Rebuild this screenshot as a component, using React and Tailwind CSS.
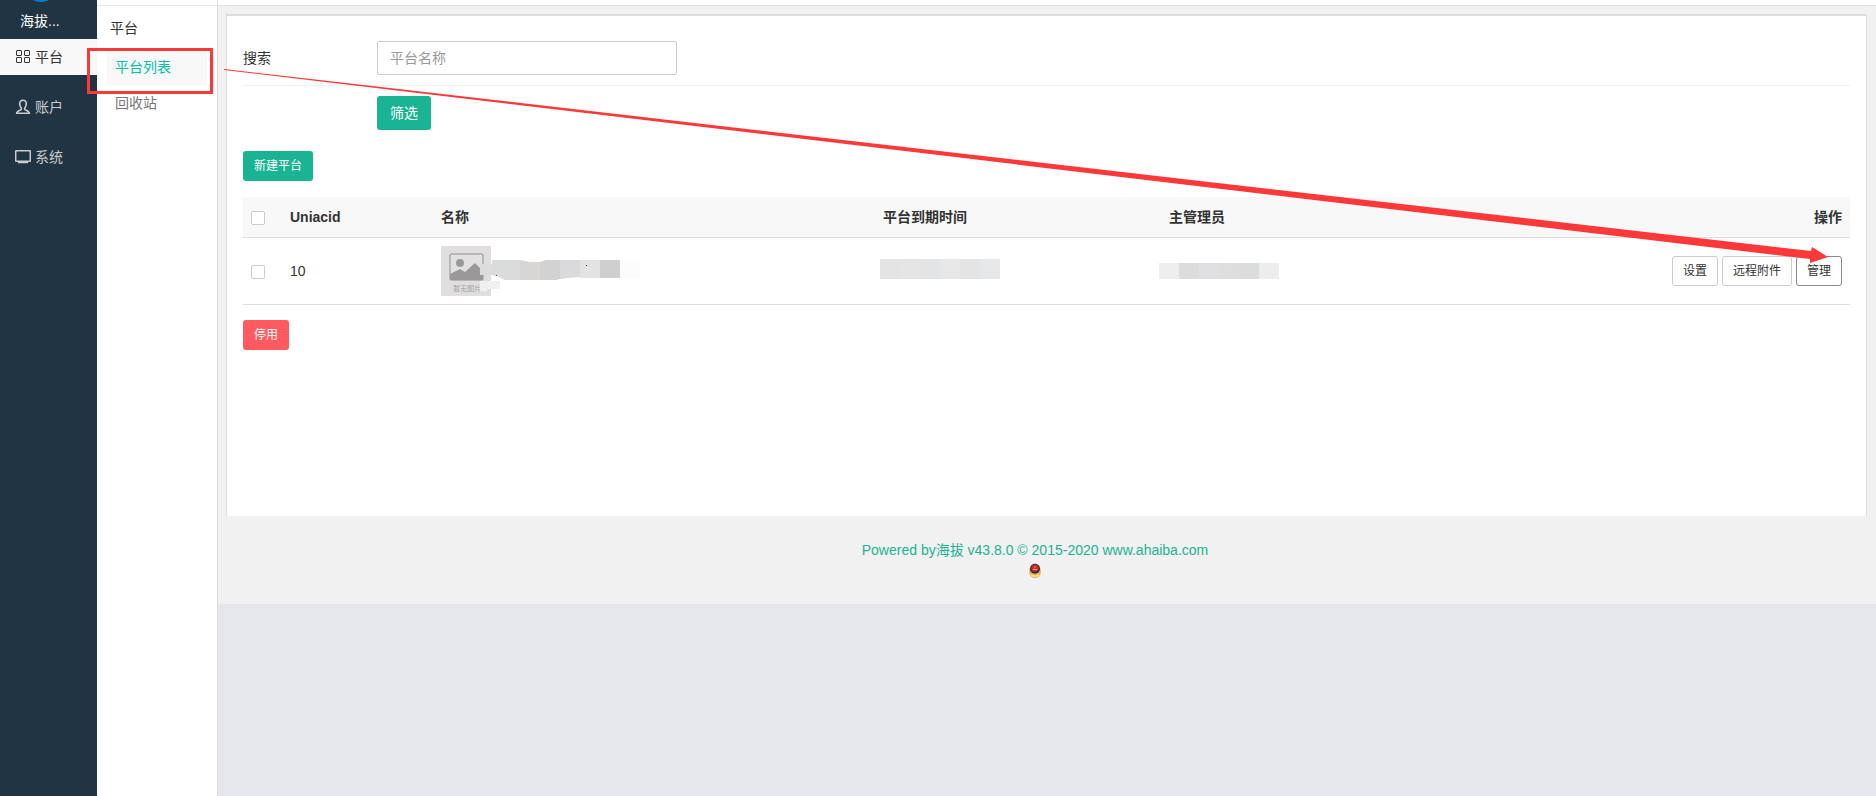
import React, { useState } from 'react';

const menus = [
  { key: 'platform', label: '平台', icon: GridIcon },
  { key: 'account', label: '账户', icon: UserIcon },
  { key: 'system', label: '系统', icon: ScreenIcon },
];

const platforms = [{ id: 10 }];

const checkboxClass =
  'block size-[14px] translate-y-px appearance-none rounded-xs border border-[#ccc] bg-white checked:bg-[#1ab394]';

function GridIcon() {
  return (
    <svg width="16" height="16" viewBox="0 0 16 16" fill="none" stroke="currentColor" strokeWidth="1">
      <rect x="1.5" y="1.5" width="5" height="5" rx="0.5" />
      <rect x="9.5" y="1.5" width="5" height="5" rx="0.5" />
      <rect x="1.5" y="8.5" width="5" height="5" rx="0.5" />
      <rect x="9.5" y="8.5" width="5" height="5" rx="0.5" />
    </svg>
  );
}

function UserIcon() {
  return (
    <svg width="16" height="16" viewBox="0 0 16 16" fill="none" stroke="currentColor" strokeWidth="1.6">
      <path d="M8 1.2c-2.200 0-3.300 1.500-3.300 3.500 0 1.800.6 3.100 1.500 4.300.7 1-.1 2-1.200 2.300-1.700.5-3 1-3.300 2.900h12.600c-.3-1.900-1.600-2.400-3.300-2.900-1.100-.3-1.900-1.300-1.200-2.300.9-1.200 1.500-2.500 1.500-4.300C11.300 2.700 10.200 1.200 8 1.200z" />
    </svg>
  );
}

function ScreenIcon() {
  return (
    <svg width="16" height="16" viewBox="0 0 16 16" fill="none" stroke="currentColor" strokeWidth="1.5">
      <rect x="0.700" y="1.700" width="14.600" height="10.600" rx="0.500" />
      <path d="M3 13.500h10" />
    </svg>
  );
}

function MaskedName() {
  return (
    <svg width="200" height="50" viewBox="0 0 200 50" className="block">
      <rect width="50" height="50" fill="#e0dedf" />
      <rect x="9" y="8" width="33" height="26" rx="2" fill="#e2e0e1" stroke="#aaa" strokeWidth="1.500" />
      <circle cx="19" cy="17" r="4" fill="#999" />
      <path d="M9 28l10-5 5 3 10-9 8 8v8a1 1 0 0 1-1 1H10a1 1 0 0 1-1-1z" fill="#999" />
      <text x="12" y="45" fontSize="7" fill="#a5a5a5" fontFamily="Noto Sans CJK SC, sans-serif">暂无图片</text>
      <path d="M39 18h12v-4h9v15H39z" fill="#dcdcdc" />
      <path d="M39 35h20v8H46v2h-7z" fill="#f0f0f0" />
      <path d="M51 14h29v20H64l-6-3-7-2z" fill="#dadcdb" />
      <path d="M79 14l10 2h10v18H79z" fill="#d7d6d4" />
      <path d="M99 16l6-2h14v19l-4 1H99z" fill="#d2d2d2" />
      <path d="M119 14h20v17l-12 1-8 1z" fill="#dadadd" />
      <rect x="139" y="14" width="20" height="18" fill="#e3e3e3" />
      <rect x="159" y="14" width="20" height="18" fill="#cfcfcf" />
      <rect x="179" y="14" width="20" height="18" fill="#fcfcfc" />
      <rect x="145" y="19" width="1" height="1" fill="#333" />
      <rect x="55" y="29" width="1" height="1" fill="#a33" />
    </svg>
  );
}

function PoliceBadge() {
  return (
    <svg width="14" height="16" viewBox="0 0 14 16">
      <path d="M1 8q0-3 2-4h8q2 1 2 4.500c0 4-2.500 6.500-6 6.500S1 12.500 1 8z" fill="#eab54e" />
      <circle cx="7" cy="5.800" r="5" fill="#2d2a55" />
      <circle cx="7" cy="5.200" r="3.600" fill="#d8261c" />
      <path d="M3 12q4 2.500 8 0" stroke="#f8df92" strokeWidth="1.500" fill="none" />
      <path d="M5 6.500h4M7 3.500v1.500" stroke="#f4b13a" strokeWidth="1" />
    </svg>
  );
}

function App() {
  const [active, setActive] = useState('platform');
  const [keyword, setKeyword] = useState('');

  return (
    <div className="relative flex min-h-screen bg-[#e6e7eb] font-['Liberation_Sans','Noto_Sans_CJK_SC',sans-serif] text-sm text-[#333]">
      {/* Main menu */}
      <nav className="flex w-[97px] shrink-0 flex-col bg-[#203443]">
        <div className="flex h-[39px] flex-col">
          <svg width="24" height="2" viewBox="0 0 24 2" className="ml-[29px]">
            <circle cx="12" cy="-15" r="17" fill="#0b7bd0" />
          </svg>
          <span className="pt-[7px] pl-5 leading-6 text-white">海拔...</span>
        </div>
        <ul className="space-y-[14px]">
          {menus.map(({ key, label, icon: Icon }) => (
            <li key={key}>
              <button
                onClick={() => setActive(key)}
                className={`flex h-9 w-full items-center gap-1 pl-[15px] ${
                  active === key ? 'bg-[#f8f8f8] text-[#333]' : 'text-[#ccc]'
                }`}
              >
                <Icon />
                {label}
              </button>
            </li>
          ))}
        </ul>
      </nav>

      {/* Sub menu */}
      <aside className="w-[121px] shrink-0 border-r border-[#ddd] bg-white">
        <div className="h-[6px] border-b border-[#e7e7e7]" />
        <h2 className="px-[13px] pt-3 pb-3 leading-5">平台</h2>
        <ul className="px-[10px]">
          <li>
            <a href="#list" className="block rounded-xs bg-[#f8f8f8] px-2 leading-[35px] text-[#00c1a9]">平台列表</a>
          </li>
          <li>
            <a href="#recycle" className="block px-2 leading-9 text-[#777]">回收站</a>
          </li>
        </ul>
      </aside>

      <div className="min-w-0 flex-1">
        <div className="h-[6px] border-b border-[#e0e0e0] bg-white" />
        <div className="bg-[#f1f1f1] pt-2">
          <main className="mr-[9px] ml-2 min-h-[502px] border border-t-2 border-b-0 border-[#ddd] bg-white px-4 pt-[25px]">
            <form onSubmit={(e) => e.preventDefault()}>
              <div className="flex items-center border-b border-[#f1f1f1] pb-[10px]">
                <label htmlFor="keyword" className="w-[134px]">搜索</label>
                <input
                  id="keyword"
                  value={keyword}
                  onChange={(e) => setKeyword(e.target.value)}
                  placeholder="平台名称"
                  className="h-[34px] w-[300px] rounded-xs border border-[#ccc] px-3 placeholder:text-[#999]"
                />
              </div>
              <button className="mt-[10px] ml-[134px] block h-[34px] rounded-[3px] bg-[#1ab394] px-[13px] text-white">
                筛选
              </button>
            </form>

            <button className="mt-[21px] block h-[30px] rounded-[3px] bg-[#1ab394] px-[11px] text-xs text-white">
              新建平台
            </button>

            <table className="mt-4 w-full table-fixed">
              <thead>
                <tr className="h-10 border-b border-[#ddd] bg-[#f8f8f8] text-left">
                  <th className="w-[39px] px-2"><input type="checkbox" aria-label="全选" className={checkboxClass} /></th>
                  <th className="w-[9.4%] px-2">Uniacid</th>
                  <th className="w-[27.5%] px-2">名称</th>
                  <th className="w-[17.8%] px-2">平台到期时间</th>
                  <th className="px-2">主管理员</th>
                  <th className="px-2 text-right">操作</th>
                </tr>
              </thead>
              <tbody>
                {platforms.map((item) => (
                  <tr key={item.id} className="h-[67px] border-b border-[#ddd]">
                    <td className="px-2"><input type="checkbox" aria-label="选择" className={checkboxClass} /></td>
                    <td className="px-2">{item.id}</td>
                    <td className="px-2"><MaskedName /></td>
                    <td className="px-[5px] pb-1">
                      <div className="flex h-5 w-[120px]">
                        <span className="flex-1 bg-[#e4e4e4]" />
                        <span className="flex-1 bg-[#e5e5e5]" />
                        <span className="flex-1 bg-[#e3e4e6]" />
                        <span className="flex-1 bg-[#e7e7e7]" />
                        <span className="flex-1 bg-[#e4e4e4]" />
                        <span className="flex-1 bg-[#e6e7e9]" />
                      </div>
                    </td>
                    <td>
                      <div className="-ml-0.5 flex h-4 w-[120px]">
                        <span className="flex-1 bg-[#eee]" />
                        <span className="flex-1 bg-[#dcdcdc]" />
                        <span className="flex-1 bg-[#e0e0e2]" />
                        <span className="flex-1 bg-[#dedede]" />
                        <span className="flex-1 bg-[#dadddb]" />
                        <span className="flex-1 bg-[#ededed]" />
                      </div>
                    </td>
                    <td className="px-2">
                      <div className="flex justify-end gap-1 text-xs">
                        <button className="h-[30px] rounded-[3px] border border-[#ccc] px-[10px]">设置</button>
                        <button className="h-[30px] rounded-[3px] border border-[#ccc] px-[10px]">远程附件</button>
                        <button className="h-[30px] rounded-[3px] border border-[#888] px-[10px]">管理</button>
                      </div>
                    </td>
                  </tr>
                ))}
              </tbody>
            </table>

            <button className="mt-[15px] block h-[30px] rounded-[3px] bg-[#ff5a5f] px-[11px] text-xs text-white">
              停用
            </button>
          </main>

          <footer className="flex h-[88px] flex-col items-center gap-[3px] pt-6 pr-6 text-[#1ab394]">
            <a href="#home" className="leading-5">Powered by海拔 v43.8.0 © 2015-2020 www.ahaiba.com</a>
            <PoliceBadge />
          </footer>
        </div>
      </div>

      {/* Guide marks */}
      <div className="pointer-events-none absolute top-12 left-[87px] h-[46px] w-[126px] border-3 border-[#fc3838]" />
      <svg width="1604" height="196" viewBox="0 0 1604 196" className="pointer-events-none absolute top-[68px] left-[224px]">
        <path d="M0 1L1587 183L1588 179L1604 189L1586 195L1586 191L0 2z" fill="#fc3838" />
      </svg>
    </div>
  );
}

export default App;
